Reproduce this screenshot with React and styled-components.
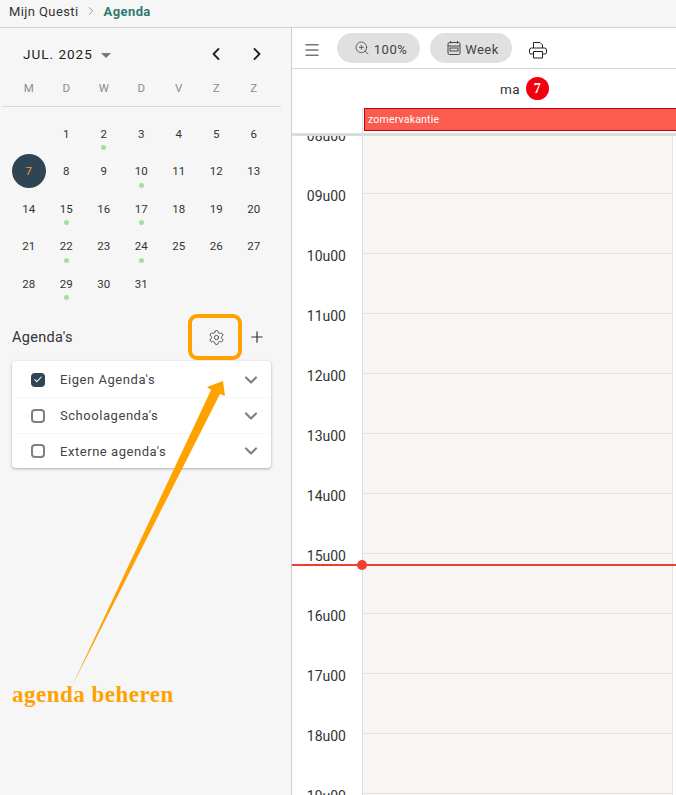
import React from 'react'
import styled, { createGlobalStyle } from 'styled-components'
import { Settings, Plus, ChevronDown, ChevronLeft, ChevronRight, ZoomIn, Check, Menu } from 'lucide-react'

const days = ['M', 'D', 'W', 'D', 'V', 'Z', 'Z']
const dates = [null, ...Array.from({ length: 31 }, (_, i) => i + 1)]
const dotted = [2, 10, 15, 17, 22, 24, 29]
const hours = ['08', '09', '10', '11', '12', '13', '14', '15', '16', '17', '18', '19']
const agendas = [
   { name: "Eigen Agenda's", checked: true },
   { name: "Schoolagenda's", checked: false },
   { name: "Externe agenda's", checked: false },
]

const App = () => {
   return (
      <Page>
         <GlobalStyle />
         <Breadcrumb>
            <span>Mijn Questi</span>
            <Crumb><ChevronRight size={14} strokeWidth={1.2} /></Crumb>
            <Current>Agenda</Current>
         </Breadcrumb>
         <Main>
            <Sidebar>
               <MonthBar>
                  <MonthName>JUL. 2025</MonthName>
                  <Caret />
                  <MonthNav>
                     <ChevronLeft size={20} strokeWidth={2.2} />
                     <ChevronRight size={20} strokeWidth={2.2} />
                  </MonthNav>
               </MonthBar>
               <WeekDays>
                  {days.map((d, i) => <WeekDay key={i}>{d}</WeekDay>)}
               </WeekDays>
               <Dates>
                  {dates.map((d, i) => (
                     <DateCell key={i}>
                        {d && <DateNumber $today={d === 7}>{d}</DateNumber>}
                        {dotted.includes(d) && <Dot />}
                     </DateCell>
                  ))}
               </Dates>
               <AgendaHead>
                  <AgendaTitle>Agenda's</AgendaTitle>
                  <GearButton>
                     <Settings size={17} strokeWidth={1.3} />
                  </GearButton>
                  <PlusButton><Plus size={18} strokeWidth={1.6} /></PlusButton>
               </AgendaHead>
               <AgendaCard>
                  {agendas.map(a => (
                     <AgendaRow key={a.name}>
                        <CheckBox $checked={a.checked}>
                           {a.checked && <Check size={11} strokeWidth={2.5} color="#fff" />}
                        </CheckBox>
                        <AgendaName>{a.name}</AgendaName>
                        <RowChevron><ChevronDown size={20} strokeWidth={2.6} /></RowChevron>
                     </AgendaRow>
                  ))}
               </AgendaCard>
               <Arrow width="291" height="768" viewBox="0 28 291 768">
                  <polygon points="72,686 211,390 207,387 223,381 225,396 220,394" fill="#ffa200" />
               </Arrow>
               <Note>agenda beheren</Note>
            </Sidebar>
            <Calendar>
               <Toolbar>
                  <MenuIcon><Menu size={18} strokeWidth={2} /></MenuIcon>
                  <Pill $width={83}>
                     <ZoomIn size={16} strokeWidth={1.2} />
                     <span>100%</span>
                  </Pill>
                  <Pill $width={82}>
                     <WeekIcon width="14" height="16" viewBox="0 0 14 16">
                        <rect x="1" y="2.5" width="12" height="12" rx="1.5" fill="none" stroke="#444" />
                        <path d="M1 6h12M3.5 1v2.5M10.5 1v2.5" stroke="#444" fill="none" />
                        <rect x="3" y="8" width="8" height="3" fill="none" stroke="#444" />
                     </WeekIcon>
                     <span>Week</span>
                  </Pill>
                  <PrintIcon width="18" height="18" viewBox="0 0 18 18">
                     <path d="M4.5 7V1.5h6.5l2.5 2.5V7" fill="none" stroke="#222" />
                     <path d="M4 13H2a1.5 1.5 0 0 1-1.500-1.500V9A2 2 0 0 1 2.500 7h13a2 2 0 0 1 2 2v2.500A1.500 1.500 0 0 1 16 13h-2" fill="none" stroke="#222" />
                     <path d="M4.500 10.500h9v6.500h-9z" fill="none" stroke="#222" />
                  </PrintIcon>
               </Toolbar>
               <DayHead>
                  <DayLabel>
                     <span>ma</span>
                     <DayBadge>7</DayBadge>
                  </DayLabel>
                  <AllDay>
                     <Gutter />
                     <Event>zomervakantie</Event>
                  </AllDay>
               </DayHead>
               <Scroller>
                  <HourList>
                     {hours.map(h => (
                        <HourRow key={h}>
                           <HourLabel>{h}u00</HourLabel>
                           <HourCell />
                        </HourRow>
                     ))}
                  </HourList>
                  <NowLine><NowDot /></NowLine>
               </Scroller>
            </Calendar>
         </Main>
      </Page>
   )
}

const GlobalStyle = createGlobalStyle`
   html, body {
      margin: 0;
      padding: 0;
      overflow: hidden;
   }
   * {
      box-sizing: border-box;
   }
`

const Page = styled.div`
   width: 676px;
   height: 795px;
   overflow: hidden;
   display: flex;
   flex-direction: column;
   font-family: Roboto, "Liberation Sans", sans-serif;
   color: #333;
   background: #f6f6f6;
`

const Breadcrumb = styled.div`
   height: 28px;
   flex: none;
   display: flex;
   align-items: center;
   padding: 0 0 5px 9px;
   font-size: 13px;
   letter-spacing: 0.4px;
   border-bottom: 1px solid #cfcfcf;
`

const Crumb = styled.span`
   display: flex;
   margin: 0 6px 0 5px;
   color: #777;
`

const Current = styled.span`
   font-weight: 700;
   color: #2f7a6e;
`

const Main = styled.div`
   flex: 1;
   display: flex;
   min-height: 0;
`

const Sidebar = styled.div`
   position: relative;
   width: 292px;
   flex: none;
   padding-top: 14px;
   border-right: 1px solid #cfcfcf;
`

const MonthBar = styled.div`
   display: flex;
   align-items: center;
   height: 24px;
   padding-left: 23px;
`

const MonthName = styled.span`
   font-size: 13.5px;
   letter-spacing: 1px;
   color: #222;
`

const Caret = styled.span`
   width: 0;
   height: 0;
   margin: 2px 0 0 8px;
   border-left: 5px solid transparent;
   border-right: 5px solid transparent;
   border-top: 5px solid #777;
`

const MonthNav = styled.div`
   display: flex;
   gap: 21px;
   margin-left: 95px;
   color: #222;
`

const WeekDays = styled.div`
   display: grid;
   grid-template-columns: repeat(7, 37.5px);
   margin: 15px 10px 0 2px;
   padding: 0 0 11px 8px;
   width: 279px;
   border-bottom: 1px solid #d9d9d9;
`

const WeekDay = styled.span`
   text-align: center;
   font-size: 11.5px;
   line-height: 14px;
   color: #8c8c8c;
`

const Dates = styled.div`
   display: grid;
   grid-template-columns: repeat(7, 37.5px);
   grid-auto-rows: 37.5px;
   padding: 8px 0 0 10px;
`

const DateCell = styled.div`
   position: relative;
   display: flex;
   align-items: center;
   justify-content: center;
`

const DateNumber = styled.span`
   display: flex;
   align-items: center;
   justify-content: center;
   width: 34px;
   height: 34px;
   border-radius: 50%;
   font-size: 11.5px;
   color: ${p => (p.$today ? '#e8a020' : '#333')};
   background: ${p => (p.$today ? '#2f4554' : 'transparent')};
`

const Dot = styled.span`
   position: absolute;
   left: 50%;
   top: 30px;
   width: 5px;
   height: 5px;
   margin-left: -2.5px;
   border-radius: 50%;
   background: #a5dca5;
`

const AgendaHead = styled.div`
   display: flex;
   align-items: center;
   height: 46px;
   margin-top: 11px;
   padding-left: 12px;
`

const AgendaTitle = styled.span`
   font-size: 14.5px;
   letter-spacing: 0.3px;
   color: #333;
   margin: 2px auto 0 0;
`

const GearButton = styled.div`
   display: flex;
   align-items: center;
   justify-content: center;
   width: 54px;
   height: 46px;
   margin-right: 6px;
   padding: 2px 0 0 3px;
   border: 4px solid #ffa200;
   border-radius: 9px;
   color: #444;
`

const PlusButton = styled.div`
   display: flex;
   width: 18px;
   margin-right: 25px;
   color: #333;
`

const AgendaCard = styled.div`
   width: 259px;
   margin: 1px 0 0 12px;
   background: #fff;
   border-radius: 4px;
   box-shadow: 0 1px 3px rgba(0, 0, 0, 0.3);
`

const AgendaRow = styled.div`
   display: flex;
   align-items: center;
   height: 36px;
   padding: 1px 10px 0 19px;
   border-top: 1px solid #f6f6f6;

   &:first-child {
      border-top: none;
      padding-top: 2px;
   }
   &:last-child {
      height: 35px;
   }
`

const CheckBox = styled.span`
   display: flex;
   align-items: center;
   justify-content: center;
   width: 14px;
   height: 14px;
   border-radius: 4px;
   border: 2px solid ${p => (p.$checked ? '#2f4554' : '#808080')};
   background: ${p => (p.$checked ? '#2f4554' : 'transparent')};
`

const AgendaName = styled.span`
   margin-left: 15px;
   font-size: 13px;
   letter-spacing: 0.55px;
   color: #444;
`

const RowChevron = styled.span`
   display: flex;
   margin-left: auto;
   color: #808080;
`

const Arrow = styled.svg`
   position: absolute;
   left: 0;
   top: 0;
   pointer-events: none;
`

const Note = styled.div`
   position: absolute;
   left: 12px;
   top: 653px;
   font-family: "Liberation Serif", serif;
   font-size: 23px;
   font-weight: 700;
   line-height: 28px;
   letter-spacing: 0.5px;
   color: #ffa200;
`

const Calendar = styled.div`
   flex: 1;
   min-width: 0;
   display: flex;
   flex-direction: column;
   background: #fff;
`

const Toolbar = styled.div`
   height: 41px;
   flex: none;
   display: flex;
   align-items: center;
   padding-left: 11px;
   border-bottom: 1px solid #d4d4d4;
`

const MenuIcon = styled.span`
   display: flex;
   margin: 4px 16px 0 0;
   color: #777;
`

const Pill = styled.div`
   display: flex;
   align-items: center;
   justify-content: center;
   gap: 4px;
   width: ${p => p.$width}px;
   height: 30px;
   margin-right: 10px;
   padding-left: 4px;
   border-radius: 15px;
   background: #e0e0e0;
   font-size: 13px;
   letter-spacing: 0.5px;
   color: #444;

   span {
      padding-top: 2px;
   }
`

const WeekIcon = styled.svg`
   flex: none;
`

const PrintIcon = styled.svg`
   flex: none;
   margin: 4px 0 0 7px;
`

const DayHead = styled.div`
   flex: none;
   height: 64px;
   display: flex;
   flex-direction: column;
`

const DayLabel = styled.div`
   height: 39px;
   flex: none;
   display: flex;
   align-items: center;
   justify-content: flex-end;
   gap: 6px;
   padding-right: 127px;
   font-size: 13.5px;
   letter-spacing: 0.4px;
   color: #333;
`

const DayBadge = styled.span`
   display: flex;
   align-items: center;
   justify-content: center;
   width: 23px;
   height: 23px;
   border-radius: 50%;
   background: #f2000f;
   color: #fff;
   font-family: "Liberation Serif", serif;
   font-size: 14px;
   font-weight: 700;
`

const AllDay = styled.div`
   display: flex;
   height: 25px;
`

const Gutter = styled.div`
   width: 71px;
   flex: none;
   border-right: 1px solid #dcdcdc;
`

const Event = styled.div`
   flex: 1;
   height: 23px;
   margin-left: 1px;
   padding-left: 3px;
   background: #fb5c4f;
   border: 1px solid #c00010;
   border-right: none;
   font-size: 10.5px;
   line-height: 22px;
   letter-spacing: 0.2px;
   color: #fff;
`

const Scroller = styled.div`
   position: relative;
   flex: 1;
   min-height: 0;
   overflow: hidden;
   border-top: 3px solid #dcdcdc;
`

const HourList = styled.div`
   margin-top: -3px;
`

const HourRow = styled.div`
   display: flex;
   height: 60px;
`

const HourLabel = styled.div`
   width: 71px;
   height: 67px;
   flex: none;
   margin-top: -7px;
   padding-right: 16px;
   text-align: right;
   font-size: 14px;
   line-height: 20px;
   color: #333;
   border-right: 1px solid #dcdcdc;
`

const HourCell = styled.div`
   flex: 1;
   background: #f7f6f2;
   border-top: 1px solid #e2e2e2;
   border-right: 1px solid #e2e2e2;
   margin-right: 3px;
`

const NowLine = styled.div`
   position: absolute;
   left: 0;
   right: 0;
   top: 428px;
   height: 2px;
   background: #f03e2f;
`

const NowDot = styled.span`
   position: absolute;
   left: 65px;
   top: -4px;
   width: 10px;
   height: 10px;
   border-radius: 50%;
   background: #f03e2f;
`

export default App
